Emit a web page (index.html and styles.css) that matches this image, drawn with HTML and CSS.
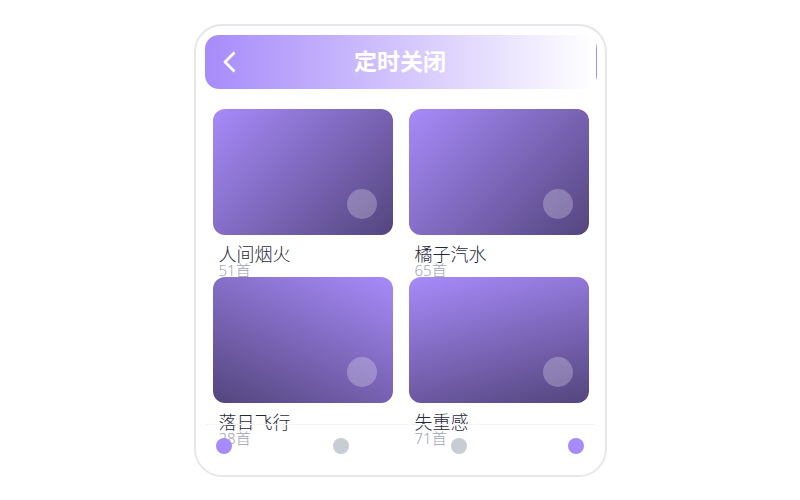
FILE: index.html
```html
<!DOCTYPE html>
<html lang="zh-CN">
<head>
  <meta charset="UTF-8">
  <meta name="viewport" content="width=device-width, initial-scale=1.0">
  <title>定时关闭</title>
  <link rel="stylesheet" href="styles.css">
</head>
<body>
  <div class="phone">
    <header class="header">
      <button class="back" type="button" aria-label="返回">
        <svg width="16" height="24" viewBox="0 0 16 24" fill="none" stroke="#fff" stroke-width="2.8" stroke-linejoin="round">
          <path d="M13.5 3.5 L4 13 L13.5 22.5"/>
        </svg>
      </button>
      <h1 class="title">定时关闭</h1>
    </header>
    <main class="list">
      <article class="card">
        <div class="cover cover-right"><span class="play"></span></div>
        <h2 class="name">人间烟火</h2>
        <p class="count">51首</p>
      </article>
      <article class="card">
        <div class="cover cover-right"><span class="play"></span></div>
        <h2 class="name">橘子汽水</h2>
        <p class="count">65首</p>
      </article>
      <article class="card">
        <div class="cover cover-left"><span class="play"></span></div>
        <h2 class="name">落日飞行</h2>
        <p class="count">28首</p>
      </article>
      <article class="card">
        <div class="cover cover-down"><span class="play"></span></div>
        <h2 class="name">失重感</h2>
        <p class="count">71首</p>
      </article>
    </main>
    <nav class="tabs">
      <button class="tab active" type="button" aria-label="首页"></button>
      <button class="tab" type="button" aria-label="发现"></button>
      <button class="tab" type="button" aria-label="收藏"></button>
      <button class="tab active" type="button" aria-label="我的"></button>
    </nav>
  </div>
</body>
</html>
```
FILE: styles.css
```css
* {
  box-sizing: border-box;
}

body {
  margin: 0;
  min-height: 100vh;
  display: flex;
  justify-content: center;
  align-items: center;
  background: #fff;
  font-family: "Noto Sans", "Noto Sans CJK SC", sans-serif;
}

.phone {
  position: relative;
  width: 100%;
  max-width: 413px;
  padding: 9px 8px 30px 9px;
  border: 2px solid #e5e7eb;
  border-radius: 28px;
  background: #fff;
}

.header {
  display: grid;
  grid-template-columns: 48px 1fr 48px;
  align-items: center;
  height: 54px;
  padding-bottom: 2px;
  border-right: 1px solid transparent;
  border-radius: 14px;
  background: linear-gradient(90deg, #a78bfa, #fff);
}

.back {
  display: flex;
  justify-content: center;
  padding: 0;
  border: none;
  background: none;
  cursor: pointer;
}

.title {
  margin: 0;
  color: #fff;
  font-size: 23px;
  font-weight: 700;
  line-height: 24px;
  text-align: center;
}

.list {
  display: grid;
  grid-template-columns: 1fr 1fr;
  column-gap: 16px;
  padding: 20px 8px 0;
}

/* each card paints over the count line of the one above it */
.cover {
  position: relative;
  display: flex;
  justify-content: flex-end;
  align-items: flex-end;
  height: 126px;
  margin-bottom: 10px;
  padding: 16px;
  border-radius: 12px;
}

.cover-right {
  background: linear-gradient(135deg, #a78bfa, #54457d);
}

.cover-left {
  background: linear-gradient(205deg, #a78bfa, #54457d);
}

.cover-down {
  background: linear-gradient(165deg, #a78bfa, #54457d);
}

.play {
  width: 30px;
  height: 30px;
  border-radius: 50%;
  background: rgba(255, 255, 255, 0.25);
}

.name {
  margin: 0 6px;
  color: #1f2937;
  font-size: 18px;
  font-weight: 300;
  line-height: 18px;
}

.count {
  margin: 0 6px;
  color: #9ca3af;
  font-size: 15px;
  font-weight: 300;
  line-height: 14px;
}

/* tab bar floats over the end of the list */
.tabs {
  position: absolute;
  right: 10px;
  bottom: 7px;
  left: 10px;
  display: flex;
  justify-content: space-between;
  align-items: center;
  height: 44px;
  padding: 0 10px;
  border-top: 1px solid #f3f4f6;
}

.tab {
  width: 16px;
  height: 16px;
  padding: 0;
  border: none;
  border-radius: 50%;
  background: #c8ccd3;
  cursor: pointer;
}

.tab.active {
  background: #a78bfa;
}
```
